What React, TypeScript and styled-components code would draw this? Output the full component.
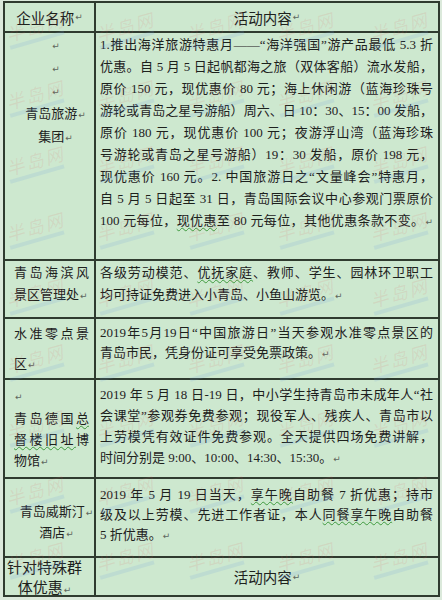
import React from 'react'
import styled, { createGlobalStyle } from 'styled-components'

const GlobalStyle = createGlobalStyle`
  body {
    margin: 0;
    background: #dbe9db;
  }
`

const Page = styled.div`
  position: relative;
  width: 442px;
  height: 600px;
  padding: 1px 0 0 3px;
  box-sizing: border-box;
  overflow: hidden;
  font-family: 'Liberation Serif', 'Noto Sans CJK SC', serif;
  color: #1d211d;
`

// the dark background shows through the 2px gaps as the table rules
const Table = styled.div`
  display: grid;
  grid-template-columns: 89px 342px;
  grid-template-rows: 28px 226px 56px 59px 97px 77px 37px;
  gap: 2px;
  padding: 2px;
  width: 437px;
  box-sizing: border-box;
  background: #2f3b2f;
`

const HeadCell = styled.div<{ $fs?: number }>`
  background: #cde8cf;
  display: flex;
  align-items: center;
  justify-content: center;
  font-size: ${p => p.$fs ?? 14.5}px;
  white-space: nowrap;
  overflow: hidden;
`

const NameCell = styled.div<{ $pt?: number; $lh?: number; $pl?: number; $pr?: number; $fs?: number }>`
  background: #cde8cf;
  box-sizing: border-box;
  padding: ${p => p.$pt ?? 1}px ${p => p.$pr ?? 5}px 0 ${p => p.$pl ?? 9}px;
  font-size: ${p => p.$fs ?? 13}px;
  line-height: ${p => p.$lh ?? 22}px;
  overflow: hidden;
`

const ContentCell = styled.div<{ $pt?: number; $lh?: number }>`
  background: #cde8cf;
  box-sizing: border-box;
  padding: ${p => p.$pt ?? 1}px 5px 0 4px;
  font-size: 13px;
  line-height: ${p => p.$lh ?? 22}px;
  overflow: hidden;
`

type Align = 'justify' | 'start' | 'center'

const Line = styled.div<{ $align?: Align }>`
  white-space: nowrap;
  text-align: ${p => (p.$align === 'center' ? 'center' : p.$align === 'start' ? 'left' : 'justify')};
  text-align-last: ${p => (p.$align === 'center' ? 'center' : p.$align === 'start' ? 'left' : 'justify')};
`

const Ret = styled.span`
  font-family: 'DejaVu Sans', sans-serif;
  font-size: 9px;
  color: #5d665d;
  margin-left: 1px;
`

const Squiggle = styled.span`
  text-decoration: underline wavy #3f9a3f;
  text-decoration-thickness: 1px;
  text-underline-offset: 2px;
`

const Mark = styled.div`
  position: absolute;
  transform: rotate(-16deg);
  font-family: 'Noto Sans CJK SC', sans-serif;
  font-size: 18px;
  font-style: italic;
  letter-spacing: 2px;
  line-height: 20px;
  color: rgba(226, 96, 96, 0.13);
  pointer-events: none;

  &::after {
    content: '';
    display: block;
    width: 56px;
    height: 4px;
    margin-top: 2px;
    background: rgba(110, 160, 225, 0.16);
  }
`

const markXs = [6, 96, 186, 276, 370]
const markYs = [16, 84, 150, 216, 282, 348, 414, 480, 546]

const R = () => <Ret>↵</Ret>

const App: React.FC = () => (
  <>
    <GlobalStyle />
    <Page>
      <Table>
        <HeadCell>
          企业名称
          <R />
        </HeadCell>
        <HeadCell>
          活动内容
          <R />
        </HeadCell>

        <NameCell $pl={12} $pr={0}>
          <Line $align="center">
            <R />
          </Line>
          <Line $align="center">
            <R />
          </Line>
          <Line $align="center">
            <R />
          </Line>
          <Line $align="center">
            青岛旅游
            <R />
          </Line>
          <Line $align="center">
            集团
            <R />
          </Line>
        </NameCell>
        <ContentCell>
          <Line>1.推出海洋旅游特惠月——“海洋强国”游产品最低 5.3 折</Line>
          <Line>优惠。自 5 月 5 日起帆都海之旅（双体客船）流水发船，</Line>
          <Line>原价 150 元，现优惠价 80 元；海上休闲游（蓝海珍珠号</Line>
          <Line>游轮或青岛之星号游船）周六、日 10：30、15：00 发船，</Line>
          <Line>原价 180 元，现优惠价 100 元；夜游浮山湾（蓝海珍珠</Line>
          <Line>号游轮或青岛之星号游船）19：30 发船，原价 198 元，</Line>
          <Line>现优惠价 160 元。2. 中国旅游日之“文量峰会”特惠月，</Line>
          <Line>自 5 月 5 日起至 31 日，青岛国际会议中心参观门票原价</Line>
          <Line>
            100 元每位，<Squiggle>现优惠</Squiggle>至 80 元每位，其他优惠条款不变。
            <R />
          </Line>
        </ContentCell>

        <NameCell>
          <Line>青岛海滨风</Line>
          <Line $align="start">
            景区管理处
            <R />
          </Line>
        </NameCell>
        <ContentCell>
          <Line>
            各级劳动模范、<Squiggle>优抚家庭</Squiggle>、教师、学生、园林环卫职工
          </Line>
          <Line $align="start">
            均可持证免费进入小青岛、小鱼山游览。
            <R />
          </Line>
        </ContentCell>

        <NameCell $pt={0} $lh={30}>
          <Line>水准零点景</Line>
          <Line $align="start">
            区<R />
          </Line>
        </NameCell>
        <ContentCell $pt={4} $lh={20}>
          <Line>2019年5月19日“中国旅游日”当天参观水准零点景区的</Line>
          <Line $align="start">
            青岛市民，凭身份证可享受免票政策。
            <R />
          </Line>
        </ContentCell>

        <NameCell $pt={5} $lh={21}>
          <Line $align="start">
            <R />
          </Line>
          <Line>
            青岛德国<Squiggle>总</Squiggle>
          </Line>
          <Line>
            <Squiggle>督楼旧址</Squiggle>博
          </Line>
          <Line $align="start">
            物馆
            <R />
          </Line>
        </NameCell>
        <ContentCell $pt={4} $lh={21}>
          <Line>2019 年 5 月 18 日-19 日，中小学生持青岛市未成年人“社</Line>
          <Line>会课堂”参观券免费参观；现役军人、残疾人、青岛市以</Line>
          <Line>上劳模凭有效证件免费参观。全天提供四场免费讲解，</Line>
          <Line $align="start">
            时间分别是 9:00、10:00、14:30、15:30。
            <R />
          </Line>
        </ContentCell>

        <NameCell $pt={23} $lh={20} $pl={14} $pr={0}>
          <Line $align="center">
            青岛威斯汀
            <R />
          </Line>
          <Line $align="center">
            酒店
            <R />
          </Line>
        </NameCell>
        <ContentCell $pt={6} $lh={20}>
          <Line>
            2019 年 5 月 19 日当天，<Squiggle>享午晚</Squiggle>自助餐 7 折优惠；持市
          </Line>
          <Line>
            级及以上劳模、先进工作者证，本人<Squiggle>同餐享午晚</Squiggle>自助餐
          </Line>
          <Line $align="start">
            5 折优惠。
            <R />
          </Line>
        </ContentCell>

        <NameCell $pt={0} $lh={20} $pl={0} $pr={10} $fs={15}>
          <Line $align="center">针对特殊群</Line>
          <Line $align="center">
            体优惠
            <R />
          </Line>
        </NameCell>
        <HeadCell>
          活动内容
          <R />
        </HeadCell>
      </Table>

      {markYs.map(y =>
        markXs.map(x => (
          <Mark key={`${x}-${y}`} aria-hidden="true" style={{ left: x, top: y }}>
            半岛网
          </Mark>
        )),
      )}
    </Page>
  </>
)

export default App
